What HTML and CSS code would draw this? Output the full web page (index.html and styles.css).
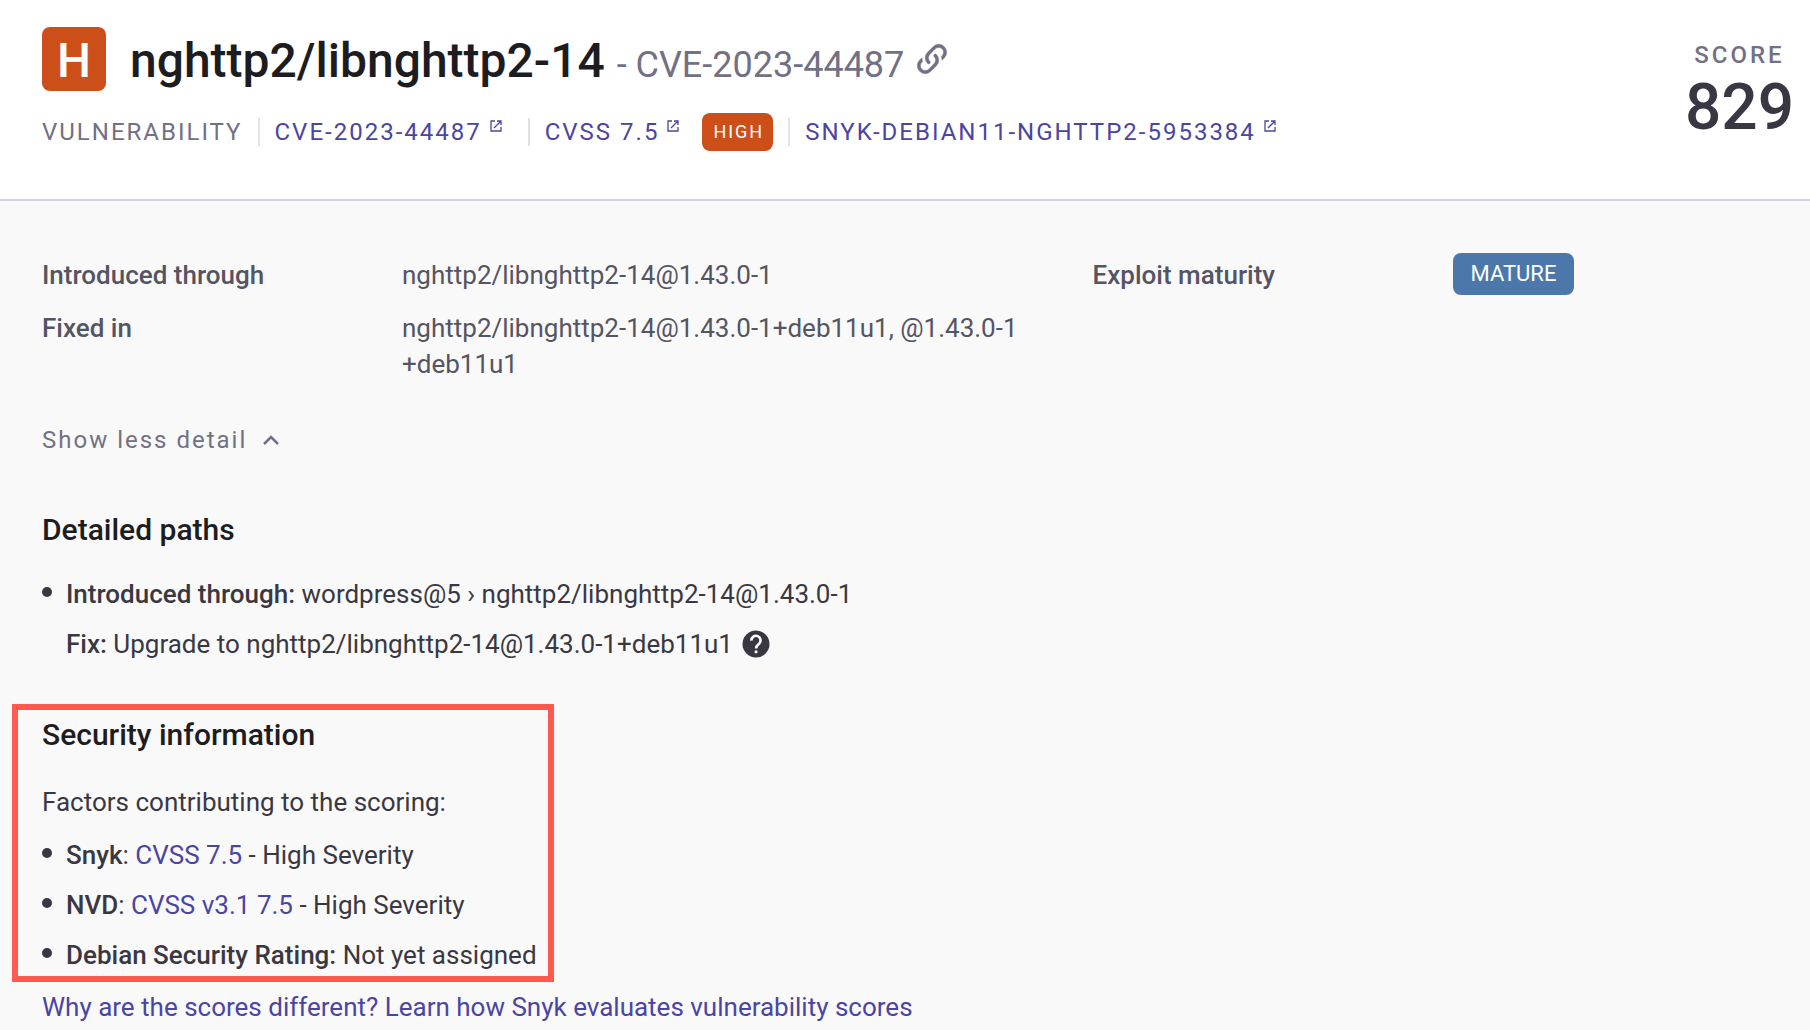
FILE: index.html
```html
<!DOCTYPE html>
<html lang="en">
<head>
<meta charset="utf-8">
<title>nghttp2/libnghttp2-14 - CVE-2023-44487</title>
<link rel="stylesheet" href="styles.css">
</head>
<body>
<svg class="sprite" aria-hidden="true">
  <symbol id="external" viewBox="0 0 12 12">
    <path d="M5 1H1v10h10V7M7 1h4v4M11 1L4 8" fill="none" stroke="currentColor" stroke-width="1.300"/>
  </symbol>
</svg>
<header class="header">
  <div class="summary">
    <div class="title-row">
      <span class="severity-icon">H</span>
      <h1 class="title">nghttp2/libnghttp2-14 <span class="title-id">- CVE-2023-44487</span></h1>
      <a class="permalink" href="#" aria-label="Permalink">
        <svg viewBox="0 0 24 24" width="38" height="38"><path d="M10.600 13.400c.4.4.4 1 0 1.400-.4.4-1 .4-1.400 0a5 5 0 0 1 0-7.100l3.500-3.500a5 5 0 0 1 7.100 7.100l-1.500 1.500c0-.8-.1-1.600-.4-2.400l.5-.5a3 3 0 0 0-4.300-4.300l-3.500 3.600a3 3 0 0 0 0 4.200m2.800-4.200c.4-.4 1-.4 1.400 0a5 5 0 0 1 0 7.100l-3.500 3.500a5 5 0 0 1-7.100-7.100l1.500-1.500c0 .8.1 1.600.4 2.400l-.5.5a3 3 0 0 0 4.300 4.300l3.500-3.600a3 3 0 0 0 0-4.200c-.4-.4-.4-1 0-1.400z" fill="currentColor" stroke="currentColor" stroke-width=".3"/></svg>
      </a>
    </div>
    <ul class="meta">
      <li class="meta-item">VULNERABILITY</li>
      <li class="meta-item"><a class="meta-link" href="#">CVE-2023-44487<svg class="external"><use href="#external"/></svg></a></li>
      <li class="meta-item"><a class="meta-link" href="#">CVSS 7.5<svg class="external"><use href="#external"/></svg></a><span class="badge badge-high">HIGH</span></li>
      <li class="meta-item"><a class="meta-link" href="#">SNYK-DEBIAN11-NGHTTP2-5953384<svg class="external"><use href="#external"/></svg></a></li>
    </ul>
  </div>
  <div class="score">
    <span class="score-label">SCORE</span>
    <strong class="score-value">829</strong>
  </div>
</header>
<main class="content">
  <div class="facts">
    <dl class="fact-list">
      <dt>Introduced through</dt>
      <dd>nghttp2/libnghttp2-14@1.43.0-1</dd>
      <dt>Fixed in</dt>
      <dd>nghttp2/libnghttp2-14@1.43.0-1+deb11u1, @1.43.0-1<wbr>+deb11u1</dd>
    </dl>
    <dl class="fact-list">
      <dt>Exploit maturity</dt>
      <dd class="fact-badge"><span class="badge badge-mature">MATURE</span></dd>
    </dl>
  </div>
  <button class="toggle" type="button">Show less detail
    <svg viewBox="0 0 16 10" width="16" height="10"><path d="M1 9l7-7 7 7" fill="none" stroke="currentColor" stroke-width="2.500"/></svg>
  </button>
  <section class="paths">
    <h2>Detailed paths</h2>
    <ul class="list">
      <li>
        <p><b>Introduced through:</b> wordpress@5 › nghttp2/libnghttp2-14@1.43.0-1</p>
        <p class="fix"><span><b>Fix:</b> Upgrade to nghttp2/libnghttp2-14@1.43.0-1+deb11u1</span>
          <svg class="help" viewBox="0 0 28 28" role="img" aria-label="Help"><circle cx="14" cy="14" r="13.500" fill="currentColor"/><path d="M9.400 10.600a4.600 4.600 0 1 1 7.700 3.200c-1.800 1.500-3 2.300-3 4.800" fill="none" stroke="#fff" stroke-width="2.600"/><path d="M12.700 20.500h2.700v2.700h-2.700z" fill="#fff"/></svg>
        </p>
      </li>
    </ul>
  </section>
  <section class="security">
    <h2>Security information</h2>
    <p>Factors contributing to the scoring:</p>
    <ul class="list">
      <li><b>Snyk</b>: <a href="#">CVSS 7.5</a> - High Severity</li>
      <li><b>NVD</b>: <a href="#">CVSS v3.1 7.5</a> - High Severity</li>
      <li><b>Debian Security Rating:</b> Not yet assigned</li>
    </ul>
  </section>
  <p class="learn"><a href="#">Why are the scores different? Learn how Snyk evaluates vulnerability scores</a></p>
</main>
</body>
</html>
```
FILE: styles.css
```css
* { box-sizing: border-box; }
body {
  margin: 0;
  background: #f9f9f9;
  color: #393842;
  font: 26px/36px Roboto, sans-serif;
}
h1, h2, p, ul, dl, dd { margin: 0; padding: 0; }
ul { list-style: none; }
a { color: #4b45a1; text-decoration: none; }
b, dt, h1, h2 { font-weight: 500; }
.sprite { display: none; }

.header {
  display: flex;
  justify-content: space-between;
  padding: 27px 16px 48px 42px;
  background: #fff;
  border-bottom: 2px solid #d3d3db;
}
.title-row { display: flex; align-items: center; height: 64px; }
.severity-icon {
  width: 64px;
  height: 64px;
  margin-right: 24px;
  border-radius: 8px;
  background: #cc4f1a;
  color: #fff;
  font-size: 48px;
  font-weight: 500;
  line-height: 68px;
  text-align: center;
}
.title { padding-top: 8px; color: #1c1c21; font-size: 48px; line-height: 64px; }
.title-id { color: #727184; font-size: 36px; font-weight: 400; }
.permalink { display: flex; margin-left: 9px; color: #727184; }

.meta {
  display: flex;
  align-items: center;
  margin-top: 22px;
  color: #727184;
  font-size: 24px;
  line-height: 38px;
  letter-spacing: 2px;
}
.meta-item { display: flex; align-items: center; }
.meta-item + .meta-item::before {
  content: "";
  width: 2px;
  height: 28px;
  margin: 0 15px;
  background: #e1e1e6;
}
.meta-link { display: flex; }
.external { width: 12px; height: 12px; margin: 7px 11px 0 8px; }
.badge { display: inline-block; border-radius: 8px; color: #fff; }
.badge-high {
  margin-left: 12px;
  padding: 0 9px 0 11px;
  background: #cc4f1a;
  font-size: 18px;
}

.score { display: flex; flex-direction: column; align-items: center; padding-top: 10px; }
.score-label { color: #727184; font-size: 24px; font-weight: 500; letter-spacing: 3px; }
.score-value { font-size: 64px; font-weight: 500; line-height: 70px; }

.content { padding: 52px 42px 0; }
.facts { display: grid; grid-template-columns: 14fr 9fr; color: #555463; }
.fact-list {
  display: grid;
  grid-template-columns: 360px 1fr;
  align-content: start;
  row-gap: 13px;
}
.fact-list dt, .fact-list dd { padding-top: 4px; }
.fact-list .fact-badge { display: flex; padding-top: 0; }
.badge-mature { padding: 0 18px; background: #4b77aa; font-size: 22px; line-height: 42px; }

.toggle {
  display: flex;
  align-items: center;
  gap: 16px;
  margin-top: 40px;
  padding: 0;
  border: 0;
  background: none;
  color: #727184;
  font: 24px/36px Roboto, sans-serif;
  letter-spacing: 2px;
}

h2 { color: #1c1c21; font-size: 30px; line-height: 40px; }
.paths { margin-top: 52px; }
.list { display: grid; gap: 14px; }
.list li { position: relative; padding-left: 24px; }
.list li::before {
  content: "";
  position: absolute;
  top: 11px;
  left: 0;
  width: 10px;
  height: 10px;
  border-radius: 50%;
  background: #393842;
}
.paths .list { margin-top: 26px; }
.fix { display: flex; align-items: center; gap: 9px; margin-top: 14px; }
.help { width: 28px; height: 28px; }

.security {
  width: fit-content;
  margin: 42px 0 0 -30px;
  padding: 5px 11px 3px 24px;
  border: 6px solid #ff5a4d;
}
.security p { margin: 29px 0 17px; }
.learn { margin-top: 7px; }
```
